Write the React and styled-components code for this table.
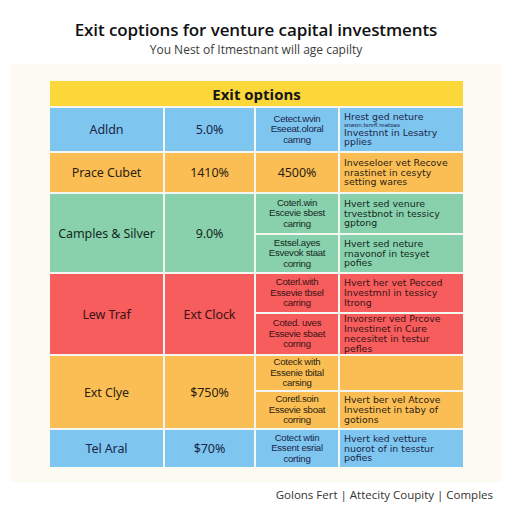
import React from "react";
import styled, { createGlobalStyle } from "styled-components";

const Global = createGlobalStyle`
  html, body { margin: 0; padding: 0; background: #ffffff; }
  body { font-family: "Open Sans", "Noto Sans", sans-serif; color: #1b1f2a; }
`;

const Page = styled.div`
  width: 512px;
  height: 512px;
  display: flex;
  flex-direction: column;
  box-sizing: border-box;
  padding-top: 19px;
`;

const Title = styled.h1`
  margin: 0;
  text-align: center;
  font-family: "Open Sans", sans-serif;
  font-weight: 600;
  font-size: 17px;
  line-height: 22px;
  color: #111;
  letter-spacing: -0.1px;
`;

const Subtitle = styled.div`
  margin-top: 1px;
  text-align: center;
  font-family: "Open Sans", sans-serif;
  font-size: 12px;
  line-height: 16px;
  color: #3c3c3c;
`;

const Panel = styled.div`
  margin: 6px 10px 0 10px;
  background: #fdfaf1;
  padding: 17px 39px 15px 40px;
`;

const Table = styled.div`
  display: grid;
  grid-template-columns: 113px 89px 82px 123px;
  grid-template-rows: 25px 43px 39px 39px 37px 38px 40px 34px 36px 37px;
  gap: 2px;
  background: #f4f6f0;
`;

const colors = {
  yellow: "#fcd73a",
  blue: "#7ec6ef",
  orange: "#fbbe55",
  green: "#89d1ad",
  red: "#f65d5c",
};

const textColors = {
  blue: "#1b2548",
  orange: "#2a1f10",
  green: "#13291d",
  red: "#3a1214",
};

const Header = styled.div`
  grid-column: 1 / 5;
  background: ${colors.yellow};
  display: flex;
  align-items: center;
  justify-content: center;
  font-weight: 700;
  font-size: 15px;
  color: #151515;
`;

const Cell = styled.div`
  background: ${(p) => colors[p.$c]};
  grid-row: ${(p) => p.$row} / span ${(p) => p.$span || 1};
  display: flex;
  align-items: center;
  justify-content: ${(p) => (p.$left ? "flex-start" : "center")};
  text-align: ${(p) => (p.$left ? "left" : "center")};
  padding: ${(p) => (p.$left ? "0 2px 0 4px" : "0 2px")};
  color: ${(p) => textColors[p.$c]};
  overflow: hidden;
`;

const MainText = styled.span`
  font-family: "Noto Sans", sans-serif;
  font-size: 12.5px;
  letter-spacing: -0.1px;
`;

const NarrowText = styled.div`
  font-family: "Liberation Sans", sans-serif;
  font-size: 9.6px;
  line-height: 10.5px;
  letter-spacing: -0.25px;
`;

const WideText = styled.div`
  font-family: "DejaVu Sans", sans-serif;
  font-size: 9.4px;
  line-height: 9.8px;
  white-space: nowrap;
`;

const Tiny = styled.div`
  font-size: 5.5px;
  line-height: 6px;
`;

const Footer = styled.div`
  margin-top: 5px;
  padding-right: 19px;
  text-align: right;
  font-family: "Open Sans", sans-serif;
  font-size: 11.5px;
  line-height: 16px;
  color: #333;
`;

const Lines = ({ lines, as: Comp }) => (
  <Comp>
    {lines.map((l, i) =>
      l.startsWith("~") ? <Tiny key={i}>{l.slice(1)}</Tiny> : <div key={i}>{l}</div>
    )}
  </Comp>
);

const rows = [
  {
    c: "blue", row: 2, span: 1, name: "Adldn", val: "5.0%",
    subs: [{ a: ["Cetect.wvin", "Eseeat.oloral", "camng"], b: ["Hrest ged neture", "~snwon.tsrefl.reatoas", "Investnnt in Lesatry", "pplies"] }],
  },
  {
    c: "orange", row: 3, span: 1, name: "Prace Cubet", val: "1410%",
    subs: [{ big: "4500%", b: ["Inveseloer vet Recove", "nrastinet in cesyty", "setting wares"] }],
  },
  {
    c: "green", row: 4, span: 2, name: "Camples & Silver", val: "9.0%",
    subs: [
      { a: ["Coterl.win", "Escevie sbest", "carring"], b: ["Hvert sed venure", "trvestbnot in tessicy", "gptong"] },
      { a: ["Estsel.ayes", "Esvevok staat", "corring"], b: ["Hvert sed neture", "rnavonof in tesyet", "pofies"] },
    ],
  },
  {
    c: "red", row: 6, span: 2, name: "Lew Traf", val: "Ext Clock",
    subs: [
      { a: ["Coterl.with", "Essevie tbsel", "carring"], b: ["Hvert her vet Pecced", "Investmnl in tessicy", "Itrong"] },
      { a: ["Coted. uves", "Essevie sbaet", "corring"], b: ["Invorsrer ved Prcove", "Investinet in Cure", "necesitet in testur", "pefles"] },
    ],
  },
  {
    c: "orange", row: 8, span: 2, name: "Ext Clye", val: "$750%",
    subs: [
      { a: ["Coteck with", "Essenie tbital", "carsing"], b: [] },
      { a: ["Coretl.soin", "Essevie sboat", "corring"], b: ["Hvert ber vel Atcove", "Investinet in taby of", "gotions"] },
    ],
  },
  {
    c: "blue", row: 10, span: 1, name: "Tel Aral", val: "$70%",
    subs: [{ a: ["Cotect wtin", "Essent esrial", "corting"], b: ["Hvert ked vetture", "nuorot of in tesstur", "pofies"] }],
  },
];

export default function App() {
  return (
    <>
      <Global />
      <Page>
        <Title>Exit coptions for venture capital investments</Title>
        <Subtitle>You Nest of Itmestnant will age capilty</Subtitle>
        <Panel>
          <Table>
            <Header>Exit options</Header>
            {rows.map((r) => (
              <React.Fragment key={r.row}>
                <Cell $c={r.c} $row={r.row} $span={r.span}>
                  <MainText>{r.name}</MainText>
                </Cell>
                <Cell $c={r.c} $row={r.row} $span={r.span}>
                  <MainText>{r.val}</MainText>
                </Cell>
                {r.subs.map((s, i) => (
                  <React.Fragment key={i}>
                    <Cell $c={r.c} $row={r.row + i}>
                      {s.big ? <MainText>{s.big}</MainText> : <Lines as={NarrowText} lines={s.a} />}
                    </Cell>
                    <Cell $c={r.c} $row={r.row + i} $left>
                      <Lines as={WideText} lines={s.b} />
                    </Cell>
                  </React.Fragment>
                ))}
              </React.Fragment>
            ))}
          </Table>
        </Panel>
        <Footer>Golons Fert | Attecity Coupity | Comples</Footer>
      </Page>
    </>
  );
}
